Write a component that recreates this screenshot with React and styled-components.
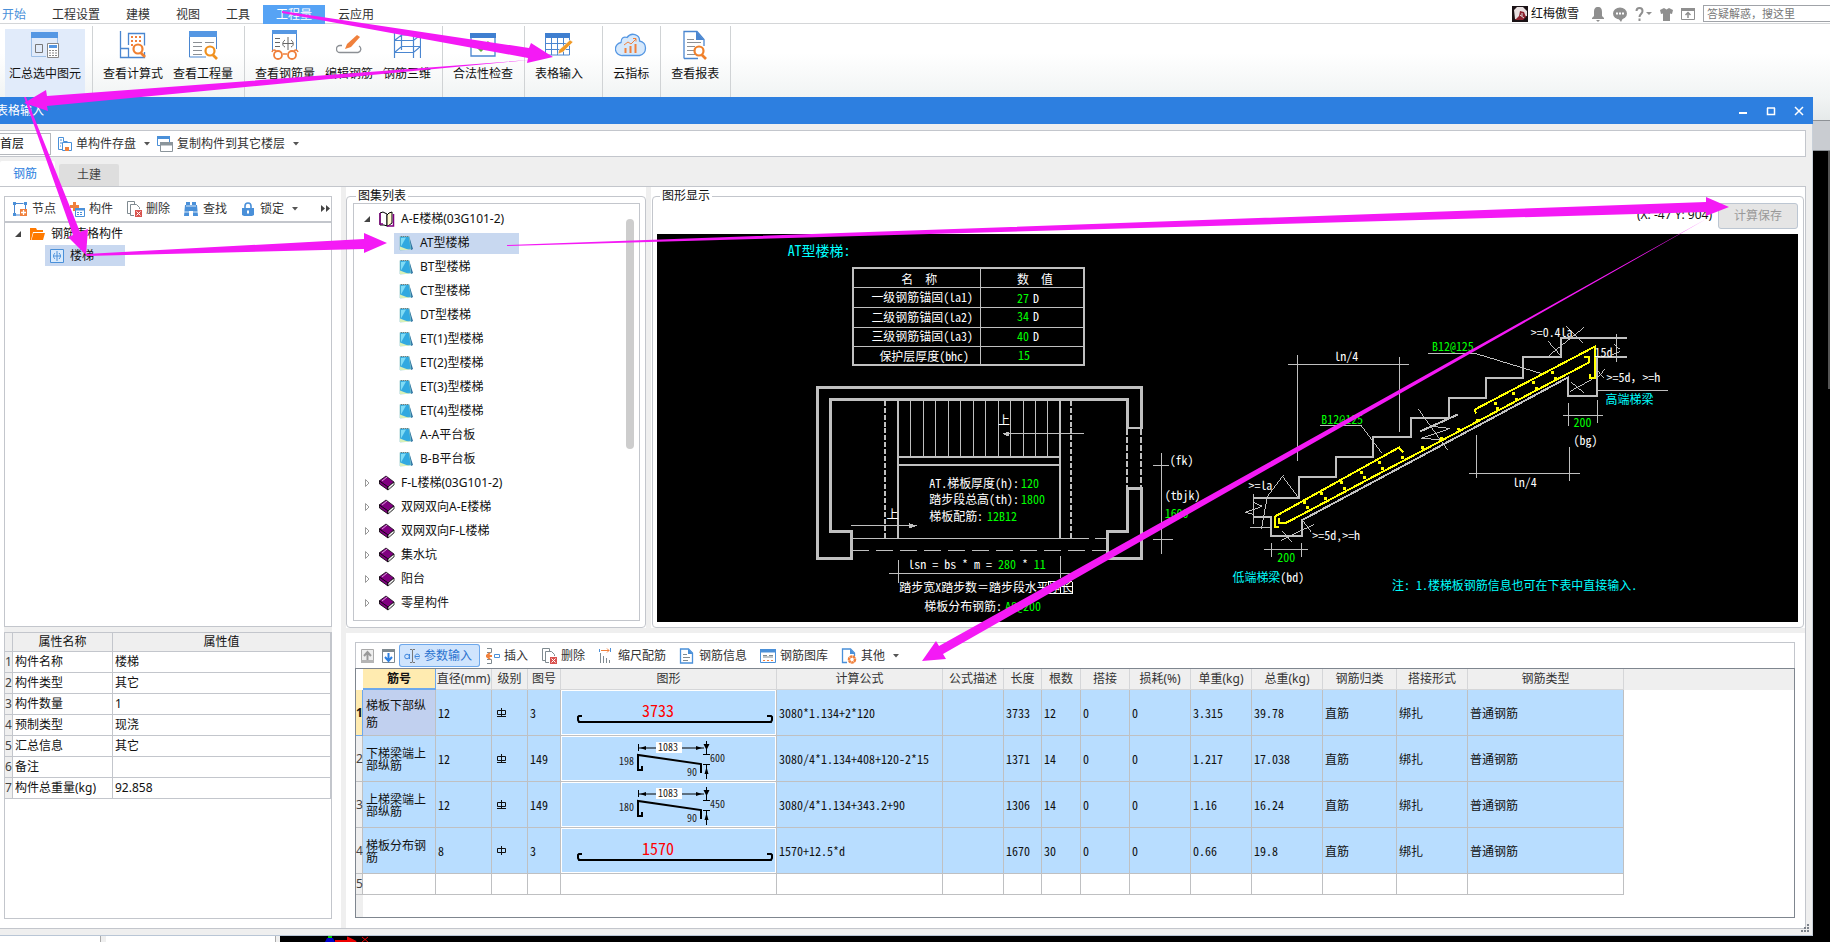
import React from "react";
import styled, { createGlobalStyle, css } from "styled-components";

const LINE = "#c3c6cc";
const BLUE = "#4a90d9";
const ORANGE = "#f0803c";

const Global = createGlobalStyle`
  *, *::before, *::after { box-sizing: border-box; }
  body { margin: 0; background: #fff; color: #111; font: 12px/16px "Noto Sans", "Noto Sans CJK SC", sans-serif; overflow: hidden; }
  button, input, select { font: inherit; color: inherit; margin: 0; padding: 0; border: 0; background: none; }
  ul { list-style: none; margin: 0; padding: 0; }
  svg { display: block; flex: none; }
`;

const halfWidth = css`
  font-family: "Noto Sans CJK SC", sans-serif;
  font-feature-settings: "hwid";
`;

const Screen = styled.div`
  position: relative; display: flex; flex-direction: column; height: 100vh; min-width: 1400px; overflow: hidden;
`;

/* ---------- menu and ribbon ---------- */
const MenuBar = styled.nav`
  display: flex; justify-content: space-between; height: 24px; padding-top: 5px; border-bottom: 1px solid #d4d6d8;
`;
const MenuTabs = styled.div`display: flex; padding-left: 2px;`;
const MenuTab = styled.button`
  height: 19px; padding: 0 13px; white-space: nowrap; color: #333;
  ${p => p.$first && css`padding-left: 0; color: ${BLUE};`}
  ${p => p.$active && css`background: #56a3f5; color: #fff;`}
`;
const UserTools = styled.div`display: flex; align-items: center; height: 17px; color: #8f8f8f;`;
const UserName = styled.span`color: #111; margin: 0 12px 0 3px;`;
const ToolIcon = styled.button`display: flex; align-items: center; gap: 2px; height: 16px; margin-right: 8px;`;
const Search = styled.input`
  width: 127px; height: 17px; border: 1px solid #a0a3a8; border-right: 0; padding-left: 3px; font-size: 11px;
  &::placeholder { color: #777; opacity: 1; }
`;
const Ribbon = styled.div`
  display: flex; flex: none; height: 73px; background: linear-gradient(#fff 40%, #f1f4f4);
`;
const RibbonGroup = styled.div`
  display: flex; gap: 2px; padding: 0 ${p => (p.$wide ? 15 : 7)}px 0 6px; margin-top: 2px;
  border-right: 1px solid #d0d3d5;
  &:first-child { padding: 0 7px 0 5px; }
`;
const RibbonButton = styled.button`
  display: flex; flex-direction: column; align-items: center; gap: 6px; margin-top: 3px; padding: 1px 4px 0;
  white-space: nowrap;
  ${p => p.$active && css`background: #e1ebfa;`}
`;
const IconBox = styled.span`display: flex; align-items: center; height: 30px;`;

/* ---------- dialog window ---------- */
const Desk = styled.div`display: flex; flex: 1; min-height: 0;`;
const Dialog = styled.section`
  flex: 1; min-width: 0; display: flex; flex-direction: column; background: #efefef;
  border-right: 1px solid #c9d0d8; border-bottom: 1px solid #b9c6d6;
`;
const DeskEdge = styled.div`
  width: 17px; display: flex; flex-direction: column; background: #000;
`;
const EdgeTop = styled.div`height: 24px; background: linear-gradient(#f1f4f4, #e6eaea); border-bottom: 1px solid #8d9196;`;
const EdgeBar = styled.div`height: 30px; background: #c9ccd1; border-bottom: 1px solid #8d9196;`;
const EdgeScroll = styled.div`align-self: flex-end; width: 2px; height: 238px; background: #555;`;
const TitleBar = styled.header`
  display: flex; justify-content: space-between; align-items: center; height: 27px; flex: none;
  background: #2d7fe0; color: #fff; padding-right: 8px; margin-right: -1px;
`;
const Title = styled.span`margin-left: -4px;`;
const WinButtons = styled.div`display: flex; gap: 16px; button { display: flex; }`;
const ActionBar = styled.div`
  display: flex; align-items: center; height: 27px; flex: none; margin: 6px 6px 0 0; background: #fff;
  border: 1px solid ${LINE}; border-left: 0;
`;
const FloorSelect = styled.select`
  appearance: none; width: 51px; height: 22px; border: 1px solid #b5b8bd; border-left: 0; background: #fff;
`;
const BarButton = styled.button`
  display: flex; align-items: center; gap: 4px; height: 23px; padding: 0 7px 0 6px; white-space: nowrap; color: #333;
  border-radius: 3px;
  ${p => p.$active && css`background: #cfe4fd; box-shadow: inset 0 0 0 1px #6da8ec; color: #2b73cf; padding: 0 8px 0 5px;`}
  ${p => p.$bare && css`padding: 0 4px;`}
  ${p => p.$tight && css`padding: 0 2px 0 5px;`}
  svg + svg { margin-left: 4px; }
`;
const Tabs = styled.div`display: flex; align-items: flex-end; gap: 4px; height: 29px; flex: none;`;
const Tab = styled.button`
  width: ${p => (p.$active ? 55 : 60)}px; height: ${p => (p.$active ? 25 : 22)}px;
  background: ${p => (p.$active ? "#fff" : "#dedede")}; color: ${p => (p.$active ? "#2d7fe0" : "#444")};
  border-radius: 2px 2px 0 0; padding-right: ${p => (p.$active ? 5 : 0)}px;
`;
const Page = styled.div`
  flex: 1; min-height: 0; display: flex; background: #fff; margin: 0 6px 6px 0;
  border: 1px solid ${LINE}; border-left: 0;
`;
const Side = styled.aside`
  flex: none; width: 341px; display: flex; flex-direction: column; padding: 9px 9px 9px 4px;
`;
const Divider = styled.div`
  flex: none; background: #efefef;
  ${p => (p.$vertical ? css`width: 5px;` : css`height: 5px;`)}
`;
const Frame = styled.div`
  display: flex; flex-direction: column; border: 1px solid ${LINE}; background: #fff; min-height: 0;
  ${p => p.$grow && css`flex: 1;`}
`;
const SideTools = styled.div`
  display: flex; align-items: center; height: 26px; border-bottom: 2px solid ${LINE}; padding-left: 1px; flex: none;
`;
const More = styled.button`margin-left: auto; padding-right: 1px; color: #444;`;
const TreeRow = styled.li`
  display: flex; align-items: center; height: ${p => p.$h}px; padding-left: ${p => p.$pad}px; gap: 7px;
`;
const TreeLabel = styled.span`
  display: flex; align-items: center; gap: 6px; height: 21px; white-space: nowrap;
  ${p => p.$tail && css`padding: 0 ${p.$tail}px 0 5px;`}
  ${p => p.$active && css`background: #c8d8f0;`}
`;
const Props = styled.div`flex: none; height: 287px; border: 1px solid ${LINE};`;
const PropTable = styled.table`
  width: 100%; table-layout: fixed; border-collapse: separate; border-spacing: 0;
  th, td { border: 0 solid ${LINE}; border-width: 0 1px 1px 0; height: 21px; padding: 0 0 0 2px; text-align: left; font-weight: 400; white-space: nowrap; }
  thead th { height: 19px; background: #efefef; text-align: center; padding: 0; }
  tbody th { background: #efefef; padding: 0; color: #444; }
`;

const Main = styled.main`flex: 1; min-width: 0; display: flex; flex-direction: column;`;
const Upper = styled.div`flex: 1; min-height: 0; display: flex;`;
const Group = styled.fieldset`
  display: flex; flex-direction: column; margin: 2px 0 0; border: 1px solid ${LINE}; border-radius: 4px;
  padding: 0 5px 6px; min-width: 0;
  ${p => (p.$grow ? css`flex: 1; padding: 0 5px 5px 4px; margin: 2px 1px 0;` : css`flex: none; width: 300px; padding: 0 5px 6px 6px;`)}
`;
const Legend = styled.legend`line-height: 14px; padding: 0 2px; margin-left: 3px;`;
const ListBody = styled.div`display: flex; flex: 1; min-height: 0; overflow: hidden; padding-top: 3px;`;
const ListTree = styled.ul`flex: 1;`;
const Thumb = styled.div`width: 8px; height: 230px; margin: 12px 5px 0 0; border-radius: 4px; background: #cdcdcd;`;
const ViewTop = styled.div`display: flex; justify-content: flex-end; align-items: flex-start; gap: 6px; height: 31px; flex: none; line-height: 24px;`;
const SaveButton = styled.button`
  width: 80px; height: 26px; border: 1px solid #bcc6d2; border-radius: 3px; background: #e5e5e5; color: #999;
`;
const Canvas = styled.svg`
  flex: 1; min-height: 0; width: 100%; background: #000;
  text { ${halfWidth} font-size: 12px; fill: #fff; white-space: pre; }
  .g { fill: #0f0; }
  .c { fill: #0ff; }
  .full { font-feature-settings: normal; }
  .big { font-size: 14px; }
`;

const Lower = styled.div`flex: none; height: 295px; padding: 9px 10px 10px 9px; display: flex; flex-direction: column;`;
const Tools = styled.div`
  display: flex; align-items: center; height: 26px; flex: none; padding-left: 1px; border: 1px solid ${LINE}; border-bottom: 0;
`;
const GridFrame = styled.div`
  flex: 1; min-height: 0; border: 1px solid #7f868f; overflow: hidden;
  background: linear-gradient(#efefef, #efefef) 0 0 / 7px 100% no-repeat #fff;
`;
const Grid = styled.table`
  width: 100%; table-layout: fixed; border-collapse: separate; border-spacing: 0;
  th, td { padding: 0; font-weight: 400; text-align: left; border: 0 solid #bfc0c2; border-width: 0 1px 1px 0; white-space: nowrap; }
  thead th { height: 21px; background: #efefef; text-align: center; color: #333; border-color: #d5d6d8; }
  thead th:first-child { background: #fff; border: 0; }
  thead th:last-child, td:last-child { border: 0; }
  thead th:nth-child(2) { background: #ffebb0; font-weight: 700; color: #111; border-bottom: 2px solid #6da8ec; border-right-color: #6da8ec; }
  tbody th { color: #444; background: #efefef; text-align: center; }
`;
const DataRow = styled.tr`
  height: ${p => (p.$empty ? 21 : 46)}px;
  td { ${halfWidth} padding-left: 2px; background: ${p => (p.$empty ? "#fff" : "#b8ddff")}; }
  td:nth-child(2) { white-space: normal; line-height: 12px; padding: 0 3px; }
  td:last-child { background: #fff; }
  td:nth-child(4) { padding-left: 4px; }
  td:nth-child(6) { padding: 0; }
  ${p => p.$current && css`
    && td:nth-child(2) { background: #c1d0ef; line-height: 17px; }
    && th { background: #ffebb0; font-weight: 700; color: #111; border-color: #6da8ec; }
  `}
`;
const Figure = styled.svg`
  width: 100%; height: 45px; border: 1px solid #fff;
  text { font-size: 10px; fill: #222; }
  .len { ${halfWidth} font-size: 16px; fill: #f00; }
`;
const Grip = styled.svg`position: absolute; right: 20px; bottom: 9px;`;
const StatusEdge = styled.div`display: flex; flex: none; height: 6px; background: #000;`;
const StatusCell = styled.div`width: ${p => p.$w}px; background: #fff; border-right: 1px solid #aaa; margin-right: ${p => p.$gap}px; box-shadow: ${p => p.$gap}px 0 0 #efefef;`;
const Notes = styled.svg`position: absolute; left: 0; top: 0; pointer-events: none; overflow: visible;`;

/* ---------- icons ---------- */
const Svg = ({ w = 16, h = 16, children, ...r }) => (
  <svg width={w} height={h} viewBox={`0 0 ${w} ${h}`} fill="none" {...r}>{children}</svg>
);
const Caret = () => <Svg w={6} h={4}><path d="M0 0h6L3 3.5z" fill="#555" /></Svg>;
const Lens = ({ x, y, c = "#f08030" }) => (
  <g stroke={c}><circle cx={x} cy={y} r="4.500" strokeWidth="2.200" fill="#fff" /><path d={`M${x + 3} ${y + 4}l4 4`} strokeWidth="2.600" /></g>
);

const SumIcon = () => (
  <Svg w={30} h={26}>
    <path d="M1.500 1v23.500H16M27.500 1v10" stroke="#9dbfe6" /><path d="M1 0h27v6H1z" fill="#5597e3" />
    <path d="M5.500 12.500h7v8h-7z" stroke="#777" /><path d="M17.500 11.500h11v14h-11z" fill="#fff" stroke="#888" />
    <path d="M19 13h8v3h-8z" fill="#5597e3" /><path d="M19 18.500h8M19 21h8M19 23.500h8" stroke="#888" strokeDasharray="2 1" />
  </Svg>
);
const FormulaIcon = () => (
  <Svg w={28} h={28}>
    <path d="M1.500 0v26.500h24V21M1.500 17.500h8v9M9.500 14V2.500h16v12" stroke="#4a86d0" strokeWidth="1.300" />
    <path d="M12 6h11M12 10h11M12 14h4" stroke={ORANGE} strokeWidth="2" strokeDasharray="2 2" /><Lens x={19} y={18} />
  </Svg>
);
const QuantityIcon = () => (
  <Svg w={30} h={30}>
    <path d="M1.500 1v26H18M28.500 1v18" stroke="#4a86d0" /><path d="M1 1h28v6H1z" fill="#5597e3" />
    <path d="M5 12.500h9M17 12.500h9M5 16.500h9M5 20.500h9M5 24.500h9" stroke="#8b8f94" /><Lens x={22} y={21} c="#f0901e" />
  </Svg>
);
const RebarViewIcon = () => (
  <Svg w={30} h={30}>
    <path d="M2.500 1v20M26.500 1v20" stroke="#4a86d0" /><path d="M2 0h25v4H2z" fill="#5597e3" />
    <path d="M5 8.500h5M5 12.500h5M5 16.500h5M18 7v13M13 13.500h10M15 10c-3 2-3 6 0 7M21 10c3 2 3 6 0 7" stroke="#666" />
    <path d="M2 22c1-3 3-2 4-1M28 22c-1-3-3-2-4-1M13 24h4" stroke={ORANGE} strokeWidth="1.600" />
    <circle cx="8" cy="25" r="4" stroke={ORANGE} strokeWidth="1.800" fill="#fff" /><circle cx="22" cy="25" r="4" stroke={ORANGE} strokeWidth="1.800" fill="#fff" />
  </Svg>
);
const RebarEditIcon = () => (
  <Svg w={26} h={20}>
    <path d="M6 10.500H4a3.500 3.500 0 000 7h18a3.500 3.500 0 001-6.500" stroke="#8b8f94" strokeWidth="1.300" />
    <path d="M9 14l2-5L21 0l3 2-9 10z" fill={ORANGE} />
  </Svg>
);
const Rebar3dIcon = () => (
  <Svg w={28} h={28}>
    <path d="M1.500 1v26M8.500 1v18M20.500 4v23M27.500 1v26M1.500 9.500L8.500 4h19M1.500 9.500h19L27.500 4M1.500 21.500l7-6h19M1.500 21.500h19l7-6" stroke="#4a86d0" strokeWidth="1.200" />
  </Svg>
);
const CheckIcon = () => (
  <Svg w={26} h={24}>
    <path d="M1 1h24v22H1z" stroke="#4a86d0" strokeWidth="1.300" fill="#fff" /><path d="M0 0h26v5H0z" fill="#3f7fd0" />
    <path d="M7 13l4 4 8-8" stroke="#61ad45" strokeWidth="3" />
  </Svg>
);
const TableIcon = () => (
  <Svg w={30} h={24}>
    <path d="M1 0h25v5H1z" fill="#3f7fd0" />
    <path d="M1.500 4v18h24V4M1 10.500h25M1 16.500h25M7.500 5v17M13.500 5v17M19.500 5v17" stroke="#4a86d0" />
    <path d="M14 21l1-4L26 7l3 2-10 10z" fill="#f09a28" stroke="#fff" strokeWidth=".5" />
  </Svg>
);
const CloudIcon = () => (
  <Svg w={32} h={24}>
    <path d="M8 22.500a6.500 6.500 0 01-2-13c0-5 3-6 6-5C16-1 25 1 24.500 8c8 1 8 13 0 14.500z" fill="#d6e8fb" stroke="#5597e3" strokeWidth="1.300" />
    <path d="M10.500 20v-5M15.500 20v-7M20.500 20v-9" stroke={ORANGE} strokeWidth="2" /><path d="M9 12l4-3 3 2 5-5M18 5.500h3v3" stroke={ORANGE} />
  </Svg>
);
const ReportIcon = () => (
  <Svg w={26} h={30}>
    <path d="M2 28.500V1.500h13l7 8V16M2 28.500h14" stroke="#4a86d0" strokeWidth="1.300" /><path d="M14 1v9h8z" fill="#4a86d0" />
    <path d="M5 9.500h7M5 12.500h14M5 16.500h8M5 20.500h7M5 24.500h8" stroke="#8b8f94" /><Lens x={17} y={21} c="#f0802a" />
  </Svg>
);
const StoreIcon = () => (
  <Svg><path d="M6 13.500H2.500V1.500h5v4h4M4 4h2M4 7h2M4 10h1" stroke={BLUE} /><path d="M6.500 6.500h9v8h-9z" stroke={BLUE} fill="#fff" /><path d="M9 11h4v4H9z" fill={ORANGE} /></Svg>
);
const CopyIcon = () => (
  <Svg><path d="M.5.5h12v9H.5z" stroke={BLUE} fill="#fff" /><path d="M0 0h13v3H0z" fill={BLUE} /><path d="M3.500 6.500h12v9h-12z" stroke="#8b959b" fill="#fff" /><path d="M3 6h13v3.500H3z" fill="#8b959b" /></Svg>
);
const NodeIcon = () => (
  <Svg><path d="M2.500 3v11H9M2.500 2.500h11V9" stroke="#4a86d0" strokeDasharray="9 3" /><path d="M1 1h3v3H1zM12 1h3v3h-3zM1 12h3v3H1z" fill={BLUE} /><path d="M8 8h7v7H8z" fill={ORANGE} /><path d="M11.500 9v5M9 11.500h5" stroke="#fff" strokeWidth="1.300" /></Svg>
);
const PartIcon = () => (
  <Svg><path d="M4 1h3v3h3v3H7v3H4V7H1V4h3z" fill={ORANGE} /><path d="M6.500 7.500h9v8h-9z" fill="#fff" stroke={BLUE} /><path d="M6 7h10v2.500H6z" fill={BLUE} /><path d="M8 11.500h6M8 13.500h6" stroke={BLUE} strokeDasharray="2 1" /></Svg>
);
const DeleteIcon = () => (
  <Svg><path d="M5 12.500H1.500V.5h7V3M4.500 3.500h6l3 3V8M4.500 3.500v11H8" stroke="#7f8a90" /><path d="M9 9h7v7H9z" fill="#d9534f" /><path d="M10.500 10.500l4 4M14.500 10.500l-4 4" stroke="#fff" /></Svg>
);
const FindIcon = () => (
  <Svg><path d="M3 1h4v3h2V1h4v3h1l1 11h-5v-5H6v5H1L2 4h1z" fill={BLUE} /><path d="M1 11h5M10 11h5M3 5h10" stroke="#fff" strokeWidth=".8" /></Svg>
);
const LockIcon = () => (
  <Svg><path d="M5 7V5a3 3 0 016 0v2" stroke={BLUE} strokeWidth="1.600" /><path d="M2 7h12v7l-2 1H4l-2-1z" fill={BLUE} /><path d="M8 9.500v3" stroke="#fff" strokeWidth="2" /></Svg>
);
const FolderIcon = () => (
  <Svg w={15}><path d="M0 2h6l1 2h6v2H3L1 14H0z" fill="#ff7a00" /><path d="M3.500 7H15l-2 7H1.500z" fill="#ff7a00" /></Svg>
);
const StairIcon = () => (
  <Svg w={14} h={14}><path d="M.5.5h13v13H.5z" stroke={BLUE} fill="#d9eafc" /><path d="M7 2v10M3 7h8M5 4c-2 2-2 4 0 6M9 4c2 2 2 4 0 6" stroke={BLUE} /></Svg>
);
const OpenArrow = () => <Svg w={8} h={8}><path d="M6 1v6H0z" fill="#444" /></Svg>;
const ShutArrow = () => <Svg w={8} h={10}><path d="M1.500 1.500v7L5 5z" stroke="#999" /></Svg>;
const OpenBook = () => (
  <Svg><path d="M1 2l3-1 4 2v12l-3-1H1z" fill="#fff" stroke="#000" /><path d="M1 2v11h3" stroke="#800080" strokeWidth="1.500" /><path d="M8 15V4l2-2 3-1v11l-4 3z" fill="#fffbd0" stroke="#000" /><path d="M14.500 3v12H8" stroke="#800080" strokeWidth="1.500" /></Svg>
);
const ShutBook = () => (
  <Svg><path d="M0 6l7-5 8 6-6 5z" fill="#800080" stroke="#000" strokeWidth=".7" /><path d="M.5 6v3l8.500 6v-3z" fill="#800080" stroke="#000" strokeWidth=".8" /><path d="M9 12l6-5v3l-6 5z" fill="#fff" stroke="#000" strokeWidth=".8" /><path d="M9.500 14l5.500-4.500" stroke="#888" /><path d="M3 6l5-4" stroke="#e0a0e0" /></Svg>
);
const SheetIcon = () => (
  <Svg w={15}><path d="M10 1l4 13-2 1z" fill="#2a6fa0" /><path d="M1 1.500h9l2 12.500-11 1z" fill="#31a9e0" stroke="#7bb" strokeWidth=".6" /><path d="M2 3l5-.5-5 9z" fill="#7fdcf5" /><path d="M1 11.500l9 3.500H1z" fill="#d8f0b8" /><path d="M2 1.500h8" stroke="#777" strokeDasharray="1 1" /></Svg>
);
const UpIcon = () => <Svg w={13} h={14}><path d="M.5.5h12v13H.5z" stroke="#aaa" fill="#eee" /><path d="M0 11h13v3H0z" fill="#b5b5b5" /><path d="M6.500 11V4M3 7l3.500-4L10 7" stroke="#999" strokeWidth="2" /></Svg>;
const DownIcon = () => <Svg w={13} h={14}><path d="M.5.5h12v13H.5z" stroke="#7f8a90" fill="#fff" /><path d="M0 0h13v3H0z" fill="#7f8a90" /><path d="M6.500 4v7M3 8l3.500 4L10 8" stroke="#2d7fe0" strokeWidth="2" /></Svg>;
const ParamIcon = () => (
  <Svg><path d="M6 1.500h2l.5.500.5-.5h2M8.500 2v12M6 14.500h2l.5-.5.500.5h2" stroke="#777" /><circle cx="3" cy="8.500" r="2.300" stroke="#3f86dc" /><path d="M5.500 6v5M11 8.500h4.500c0-3.500-4.500-3-4.500 0 0 3 3 3 4.500 1.500" stroke="#3f86dc" /></Svg>
);
const InsertIcon = () => (
  <Svg w={14}><path d="M1 .5h4.500v4H1M1 15.500h4.500v-4H1" stroke="#7f8a90" /><path d="M6 8H1M4 5L.5 8 4 11" stroke={ORANGE} strokeWidth="2" /><path d="M8.500 6.500h5v3h-5z" stroke={BLUE} /></Svg>
);
const RulerIcon = () => (
  <Svg><path d="M2.500 5v10M5.500 8v7M8.500 10v5M11.500 12v3" stroke="#7f8a90" /><path d="M1.500 1v3M12.500 0v4" stroke={BLUE} /><path d="M3 2.500h8M9 .5l2 2-2 2" stroke={ORANGE} /></Svg>
);
const InfoIcon = () => (
  <Svg><path d="M1.500 1h8l4 4v10h-12z" stroke={BLUE} strokeWidth="1.300" /><path d="M9 1v5h5" fill={BLUE} /><path d="M4 6.500h4M4 9.500h7M4 12.500h5" stroke="#7f8a90" /></Svg>
);
const LibraryIcon = () => (
  <Svg><path d="M.5 1.500h15v13H.5z" stroke={BLUE} /><path d="M0 1h16v3.500H0z" fill={BLUE} /><path d="M3 7.500h4M3 9h10M9 7.500h4" stroke="#7f8a90" /><path d="M3 12.500h10" stroke={ORANGE} strokeDasharray="2 2" /></Svg>
);
const OtherIcon = () => (
  <Svg><path d="M6 14.500H1.500V1h8l4 4v3" stroke={BLUE} strokeWidth="1.300" /><path d="M9 1v5h5z" fill={BLUE} /><circle cx="11" cy="11.500" r="3" stroke={ORANGE} strokeWidth="2.500" strokeDasharray="2.500 .4" /></Svg>
);

/* ---------- data ---------- */
const RIBBON = [
  [["汇总选中图元", SumIcon]],
  [["查看计算式", FormulaIcon], ["查看工程量", QuantityIcon]],
  [["查看钢筋量", RebarViewIcon], ["编辑钢筋", RebarEditIcon], ["钢筋三维", Rebar3dIcon]],
  [["合法性检查", CheckIcon]],
  [["表格输入", TableIcon]],
  [["云指标", CloudIcon]],
  [["查看报表", ReportIcon]],
];
const ATLAS = ["AT型楼梯", "BT型楼梯", "CT型楼梯", "DT型楼梯", "ET(1)型楼梯", "ET(2)型楼梯", "ET(3)型楼梯", "ET(4)型楼梯", "A-A平台板", "B-B平台板"];
const BOOKS = ["F-L楼梯(03G101-2)", "双网双向A-E楼梯", "双网双向F-L楼梯", "集水坑", "阳台", "零星构件"];
const PROPS = [["构件名称", "楼梯"], ["构件类型", "其它"], ["构件数量", "1"], ["预制类型", "现浇"], ["汇总信息", "其它"], ["备注", ""], ["构件总重量(kg)", "92.858"]];
const COLS = [["筋号", 73], ["直径(mm)", 56], ["级别", 36], ["图号", 33], ["图形", 216], ["计算公式", 166], ["公式描述", 61], ["长度", 38], ["根数", 39], ["搭接", 49], ["损耗(%)", 61], ["单重(kg)", 61], ["总重(kg)", 71], ["钢筋归类", 74], ["搭接形式", 71], ["钢筋类型", 156]];
const ROWS = [
  ["梯板下部纵筋", "12", 2, "3", { len: "3733" }, "3080*1.134+2*120", "", "3733", "12", "0", "0", "3.315", "39.78"],
  ["下梯梁端上部纵筋", "12", 2, "149", { l: "198", r: "600" }, "3080/4*1.134+408+120-2*15", "", "1371", "14", "0", "0", "1.217", "17.038"],
  ["上梯梁端上部纵筋", "12", 2, "149", { l: "180", r: "450" }, "3080/4*1.134+343.2+90", "", "1306", "14", "0", "0", "1.16", "16.24"],
  ["梯板分布钢筋", "8", 1, "3", { len: "1570" }, "1570+12.5*d", "", "1670", "30", "0", "0", "0.66", "19.8"],
];

const Grade = ({ bars }) => (
  <Svg w={11} h={11}><path d="M5.500 1v9M1.500 3.500h8v4h-8z" stroke="#111" />{bars === 2 && <path d="M1 9.500h9" stroke="#111" />}</Svg>
);

const Shape = ({ len, l, r }) => (
  <Figure viewBox="0 0 213 43">
    {len ? (
      <>
        <text className="len" x="80" y="26">{len}</text>
        <path d="M20 25h-3l-1 1v3l1 2h192l1-2v-3l-1-1h-4" fill="none" stroke="#000" strokeWidth="2" />
      </>
    ) : (
      <>
        <path d="M76.500 7v7M77 11h65M144.500 4v13M141 17.500h7M141 27.500h7M144.500 28v14" stroke="#000" fill="none" />
        <path d="M78 11l6-2v4zM140 11l-6-2v4zM144.500 13l-3-6h6zM144.500 30l-2 7h4z" fill="#000" />
        <path d="M80 29v4h-4V18l63 9v9" stroke="#000" strokeWidth="2" fill="none" />
        <path d="M94 5h26v11H94z" fill="#fff" />
        <text x="96" y="14">1083</text><text x="57" y="28">{l}</text><text x="148" y="25">{r}</text><text x="125" y="39">90</text>
      </>
    )}
  </Figure>
);

/* ---------- stair drawing ---------- */
const DOTS = [[1305, 503], [1308, 508], [1322, 494], [1326, 499], [1342, 483], [1345, 489], [1362, 473], [1365, 478], [1380, 463], [1383, 469], [1403, 458], [1423, 448], [1442, 439], [1459, 429], [1478, 420], [1496, 403], [1498, 408], [1514, 393], [1517, 399], [1534, 382], [1537, 388], [1553, 372], [1556, 378]];
const TREADS = Array.from({ length: 12 }, (_, i) => 910.5 + i * 12.5);
const NAMES = [["一级钢筋锚固(la1)", 302], ["二级钢筋锚固(la2)", 322], ["三级钢筋锚固(la3)", 341]];

const StairDrawing = () => (
  <Canvas viewBox="657 234 1142 389" fill="none" stroke="#c0c0c0" role="img" aria-label="AT型楼梯">
    <g shapeRendering="crispEdges">
      <path strokeWidth="2" d="M853 268h231v97H853z" />
      <path d="M980.500 268v97M853 287.500h231M853 307.500h231M853 327.500h231M853 346.500h231" />
      <g strokeWidth="3">
        <path d="M1141.500 428.500V387.500H816.500V559.500H851.500V532.500H829.500V399.500H1127.500V428.500H1143" />
        <path d="M1127.500 489.500H1141.500V559.500H1107.500V532.500H1127.500V488" />
      </g>
      <g strokeWidth="2">
        <path strokeDasharray="6 2" d="M1127 430v58M1141 430v58" />
        <path strokeDasharray="5 2" d="M885 401v139M1071 401v139" />
        <path d="M898 400v140M1060 400v140M898 458h162M898 466h162" />
      </g>
      {TREADS.map(x => <path key={x} d={`M${x} 400v58`} />)}
      <path d="M1003 434.500h81M851 526.500h66M852 539.500h237M1095 539.500h12" />
      <path strokeDasharray="17 7" d="M852 551.500h255" />
      <path fill="#c0c0c0" stroke="none" d="M1002 434.500l7-2.500v5zM917 526.500l-8-2.500v5z" />
      <path d="M889 574.500h182M898.500 561v23M1060.500 557v22M1161.500 454v101M1153 466.500h16M1153 540.500h20" />
      <path stroke="#fff" d="M1048.500 582.500h24v12h-24zM1060.500 582v12" />
      <path strokeWidth="2" d="M1254 499h46v-21h37v-20h37v-20h38v-20h38v-20h37v-20h37v-21h38v-19h67M1629 357h-31v39h-29v-18L1302.500 521v16H1272v-19h-18" />
      <path d="M1298.500 355v107M1400.500 357v76M1289 364.500h121M1477.500 436v43M1570.500 448v34M1470 474.500h111" />
      <path d="M1429 353.500h46.500L1543 374M1321 425.500h40.500L1383 454M1598 390.500h72" />
      <path d="M1564 415.500h40M1569.500 403v23M1598.500 400v23M1265 550.500h44M1272.500 544v14M1302.500 544v14" />
      <path d="M1254.500 495v30M1254 503l9 4-17 6 8 2M1251 528.500h21M1284 476l-16 21-6 33M1284 478l15 20" />
      <path d="M1567 326l17 17M1585 328l-35 28M1549 341l14 16M1618.500 334v28M1615 345l7 6-9 4" />
      <path d="M1572 382l13 11M1571 392l22-12M1598 370l7 8M1607 369l-9 10M1304 522l8 11M1315 525l-33 16M1283 532l10 11" />
      <path d="M1419 409l30 42M1435 427l16 2-29 10 19 1" />
      <path strokeWidth="2" d="M1421 432l38-17" />
      <path stroke="#ff0" strokeWidth="2" d="M1404 453l-4-5-124 69v11h4M1280 519v5h6L1590 363v-6h-5M1477 414l-1-4 120-63v31h-5v-4" />
      {DOTS.map(([x, y]) => <rect key={x} x={x - 1} y={y - 1} width="3" height="3" fill="#ff0" stroke="none" />)}
    </g>
    <g stroke="none">
      <text className="c big" x="787" y="256">AT型楼梯:</text>
      <text x="901" y="284">名  称</text><text x="1017" y="284">数  值</text>
      {NAMES.map(([t, y]) => <text key={t} x="871" y={y}>{t}</text>)}
      <text x="879" y="361">保护层厚度(bhc)</text>
      <text className="g" x="1017" y="303">27</text><text x="1033" y="303">D</text>
      <text className="g" x="1017" y="321">34</text><text x="1033" y="321">D</text>
      <text className="g" x="1017" y="341">40</text><text x="1033" y="341">D</text>
      <text className="g" x="1018" y="360">15</text>
      <text x="998" y="425">上</text><text x="886" y="520">上</text>
      <text x="929" y="489">AT.梯板厚度(h):</text><text className="g" x="1021" y="489">120</text>
      <text x="929" y="505">踏步段总高(th):</text><text className="g" x="1021" y="505">1800</text>
      <text x="929" y="522">梯板配筋:</text><text className="g" x="987" y="522">12B12</text>
      <text x="908" y="570">lsn = bs * m = <tspan className="g">280</tspan> * <tspan className="g">11</tspan></text>
      <text x="899" y="593">踏步宽X踏步数<tspan className="full">＝</tspan>踏步段水平净长</text>
      <text x="924" y="612">梯板分布钢筋:</text><text className="g" x="1005" y="612">A8@200</text>
      <text x="1170" y="466">(fk)</text><text x="1165" y="501">(tbjk)</text><text className="g" x="1165" y="519">1600</text>
      <text x="1335" y="361">ln/4</text><text x="1514" y="488">ln/4</text>
      <text className="g" x="1433" y="351">B12@125</text><text className="g" x="1322" y="424">B12@125</text>
      <text x="1532" y="337">&gt;=0.4la</text><text x="1596" y="357">15d</text><text x="1608" y="382">&gt;=5d<tspan className="full">，</tspan>&gt;=h</text>
      <text className="c" x="1607" y="404">高端梯梁</text><text className="g" x="1575" y="428">200</text><text x="1575" y="446">(bg)</text>
      <text x="1249" y="491">&gt;=la</text><text x="1313" y="541">&gt;=5d,&gt;=h</text><text className="g" x="1278" y="563">200</text>
      <text className="c" x="1233" y="583">低端梯梁<tspan fill="#fff">(bd)</tspan></text>
      <text className="c" x="1393" y="591">注: 1.楼梯板钢筋信息也可在下表中直接输入.</text>
    </g>
  </Canvas>
);

const ARROWS = [
  "282,11 529,48 531,43 553,57 527,63 528,58 282,13",
  "529,60 47,96 46,90 24,103 48,111 47,106",
  "24,97 73,235 68,237 86,255 88,229 80,232 26,97",
  "86,254 364,239 364,233 387,243 364,253 364,249 86,256",
  "507,245 1706,202 1706,197 1729,207 1706,216 1706,212 507,246",
  "1708,218 939,646 936,641 922,661 946,659 943,654",
];

export default function App() {
  return (
    <Screen>
      <Global />
      <MenuBar>
        <MenuTabs>
          <MenuTab $first>开始</MenuTab>
          {["工程设置", "建模", "视图", "工具", "工程量", "云应用"].map(t => <MenuTab key={t} $active={t === "工程量"}>{t}</MenuTab>)}
        </MenuTabs>
        <UserTools>
          <Svg><path d="M0 0h16v16H0z" fill="#1a1215" /><path d="M2 4l3-3 6 0 4 4v5l-5 1-3 3-4-1z" fill="#e8dfe0" /><path d="M8 5l4 1 2 5-3 3-8 0 4-4z" fill="#8d2430" /><path d="M8 9l4 3M10 7v3" stroke="#ddd" /></Svg>
          <UserName>红梅傲雪</UserName>
          <ToolIcon aria-label="通知"><Svg w={14}><path d="M7 1c3 0 4 2 4 5v4l2 2v1H1v-1l2-2V6c0-3 1-5 4-5zM5 14h4l-2 2z" fill="currentColor" /></Svg></ToolIcon>
          <ToolIcon aria-label="消息"><Svg w={14}><ellipse cx="7" cy="7.500" rx="7" ry="6" fill="currentColor" /><path d="M5 12l3 4 2-4z" fill="currentColor" /><path d="M3 7.500h8" stroke="#fff" strokeWidth="2" strokeDasharray="2 1" /></Svg></ToolIcon>
          <ToolIcon aria-label="帮助"><Svg w={9}><path d="M1.500 5c0-4 6-4 6 0 0 3-3 3-3 6M4.500 12.500V15" stroke="currentColor" strokeWidth="2" /></Svg><Svg w={6} h={4}><path d="M0 0h6L3 3z" fill="currentColor" /></Svg></ToolIcon>
          <ToolIcon aria-label="皮肤"><Svg w={13}><path d="M4 2l2.500 1.500L9 2l4 2-1 4-2-.5V15H3V7.500L1 8 0 4z" fill="currentColor" /></Svg></ToolIcon>
          <ToolIcon aria-label="收起"><Svg w={14}><path d="M.5 2.500h13v11H.5z" stroke="currentColor" /><path d="M0 2h14v3H0z" fill="currentColor" /><path d="M7 12V7M4.500 9L7 6.500 9.500 9" stroke="currentColor" strokeWidth="1.500" /></Svg></ToolIcon>
          <Search placeholder="答疑解惑，搜这里" aria-label="搜索" />
        </UserTools>
      </MenuBar>
      <Ribbon>
        {RIBBON.map((g, i) => (
          <RibbonGroup key={i} $wide={i === 4}>
            {g.map(([t, Icon]) => <RibbonButton key={t} $active={i === 0}><IconBox><Icon /></IconBox>{t}</RibbonButton>)}
          </RibbonGroup>
        ))}
      </Ribbon>

      <Desk>
        <Dialog>
          <TitleBar>
            <Title>表格输入</Title>
            <WinButtons>
              <button aria-label="最小化"><Svg w={12} h={12}><path d="M2 8h8" stroke="#fff" strokeWidth="2" /></Svg></button>
              <button aria-label="最大化"><Svg w={12} h={12}><path d="M2 3h8M2.500 3v6.500h7V3" stroke="#fff" strokeWidth="1.500" /></Svg></button>
              <button aria-label="关闭"><Svg w={12} h={12}><path d="M2 2l8 8M10 2l-8 8" stroke="#fff" strokeWidth="1.500" /></Svg></button>
            </WinButtons>
          </TitleBar>
          <ActionBar>
            <FloorSelect aria-label="楼层"><option>首层</option></FloorSelect>
            <BarButton $tight><StoreIcon />单构件存盘<Caret /></BarButton>
            <BarButton $tight><CopyIcon />复制构件到其它楼层<Caret /></BarButton>
          </ActionBar>
          <Tabs><Tab $active>钢筋</Tab><Tab>土建</Tab></Tabs>

          <Page>
            <Side>
              <Frame $grow>
                <SideTools>
                  <BarButton><NodeIcon />节点</BarButton>
                  <BarButton><PartIcon />构件</BarButton>
                  <BarButton><DeleteIcon />删除</BarButton>
                  <BarButton><FindIcon />查找</BarButton>
                  <BarButton><LockIcon />锁定<Caret /></BarButton>
                  <More aria-label="更多"><Svg w={9} h={8}><path d="M0 0l4 3.500L0 7zM5 0l4 3.500L5 7z" fill="#444" /></Svg></More>
                </SideTools>
                <ul>
                  <TreeRow $h={22} $pad={10}><OpenArrow /><TreeLabel><FolderIcon />钢筋表格构件</TreeLabel></TreeRow>
                  <TreeRow $h={21} $pad={40}><TreeLabel $active $tail={31}><StairIcon />楼梯</TreeLabel></TreeRow>
                </ul>
              </Frame>
              <Divider />
              <Props>
                <PropTable>
                  <colgroup><col style={{ width: 8 }} /><col style={{ width: 100 }} /><col /></colgroup>
                  <thead><tr><th /><th>属性名称</th><th>属性值</th></tr></thead>
                  <tbody>{PROPS.map(([k, v], i) => <tr key={k}><th>{i + 1}</th><td>{k}</td><td>{v}</td></tr>)}</tbody>
                </PropTable>
              </Props>
            </Side>
            <Divider $vertical />
            <Main>
              <Upper>
                <Group>
                  <Legend>图集列表</Legend>
                  <Frame $grow>
                    <ListBody>
                      <ListTree>
                        <TreeRow $h={24} $pad={10}><OpenArrow /><TreeLabel><OpenBook />A-E楼梯(03G101-2)</TreeLabel></TreeRow>
                        {ATLAS.map((t, i) => <TreeRow key={t} $h={24} $pad={40}><TreeLabel $active={i === 0} $tail={49}><SheetIcon />{t}</TreeLabel></TreeRow>)}
                        {BOOKS.map(t => <TreeRow key={t} $h={24} $pad={10}><ShutArrow /><TreeLabel><ShutBook />{t}</TreeLabel></TreeRow>)}
                      </ListTree>
                      <Thumb />
                    </ListBody>
                  </Frame>
                </Group>
                <Divider $vertical />
                <Group $grow>
                  <Legend>图形显示</Legend>
                  <ViewTop><span>(X: -47 Y: 904)</span><SaveButton disabled>计算保存</SaveButton></ViewTop>
                  <StairDrawing />
                </Group>
              </Upper>
              <Divider />
              <Lower>
                <Tools>
                  <BarButton $bare aria-label="上移"><UpIcon /></BarButton>
                  <BarButton $bare aria-label="下移"><DownIcon /></BarButton>
                  <BarButton $active><ParamIcon />参数输入</BarButton>
                  <BarButton><InsertIcon />插入</BarButton>
                  <BarButton><DeleteIcon />删除</BarButton>
                  <BarButton><RulerIcon />缩尺配筋</BarButton>
                  <BarButton><InfoIcon />钢筋信息</BarButton>
                  <BarButton><LibraryIcon />钢筋图库</BarButton>
                  <BarButton><OtherIcon />其他<Caret /></BarButton>
                </Tools>
                <GridFrame>
                  <Grid>
                    <colgroup><col style={{ width: 7 }} />{COLS.map(([t, w]) => <col key={t} style={{ width: w }} />)}<col /></colgroup>
                    <thead><tr><th />{COLS.map(([t]) => <th key={t}>{t}</th>)}<th /></tr></thead>
                    <tbody>
                      {ROWS.map((r, i) => (
                        <DataRow key={i} $current={i === 0}>
                          <th>{i + 1}</th>
                          {r.map((c, j) => <td key={j}>{j === 2 ? <Grade bars={c} /> : j === 4 ? <Shape {...c} /> : c}</td>)}
                          <td>直筋</td><td>绑扎</td><td>普通钢筋</td><td />
                        </DataRow>
                      ))}
                      <DataRow $empty><th>5</th>{COLS.map(([t]) => <td key={t} />)}<td /></DataRow>
                    </tbody>
                  </Grid>
                </GridFrame>
              </Lower>
            </Main>
          </Page>
        </Dialog>
        <DeskEdge><EdgeTop /><EdgeBar /><EdgeScroll /></DeskEdge>
      </Desk>
      <StatusEdge>
        <StatusCell $w={101} $gap={5} /><StatusCell $w={170} $gap={4} />
        <Svg w={100} h={6}><path d="M48 0h4v3h-4z" fill="#0c0" /><path d="M45 6l2-4h6l2 4z" fill="#00c" /><path d="M55 5h14M68 2l8 4h-8z" stroke="#e00" strokeWidth="2" fill="#e00" /><path d="M82 1l6 5M88 1l-6 5" stroke="#e00" /></Svg>
      </StatusEdge>
      <Grip width="9" height="9" viewBox="0 0 9 9"><path d="M6 0h2v2H6zM6 3h2v2H6zM3 3h2v2H3zM6 6h2v2H6zM3 6h2v2H3zM0 6h2v2H0z" fill="#7c828a" /></Grip>
      <Notes width="100%" height="100%" aria-hidden="true">
        {ARROWS.map(p => <polygon key={p} points={p} fill="#f41af5" />)}
      </Notes>
    </Screen>
  );
}
